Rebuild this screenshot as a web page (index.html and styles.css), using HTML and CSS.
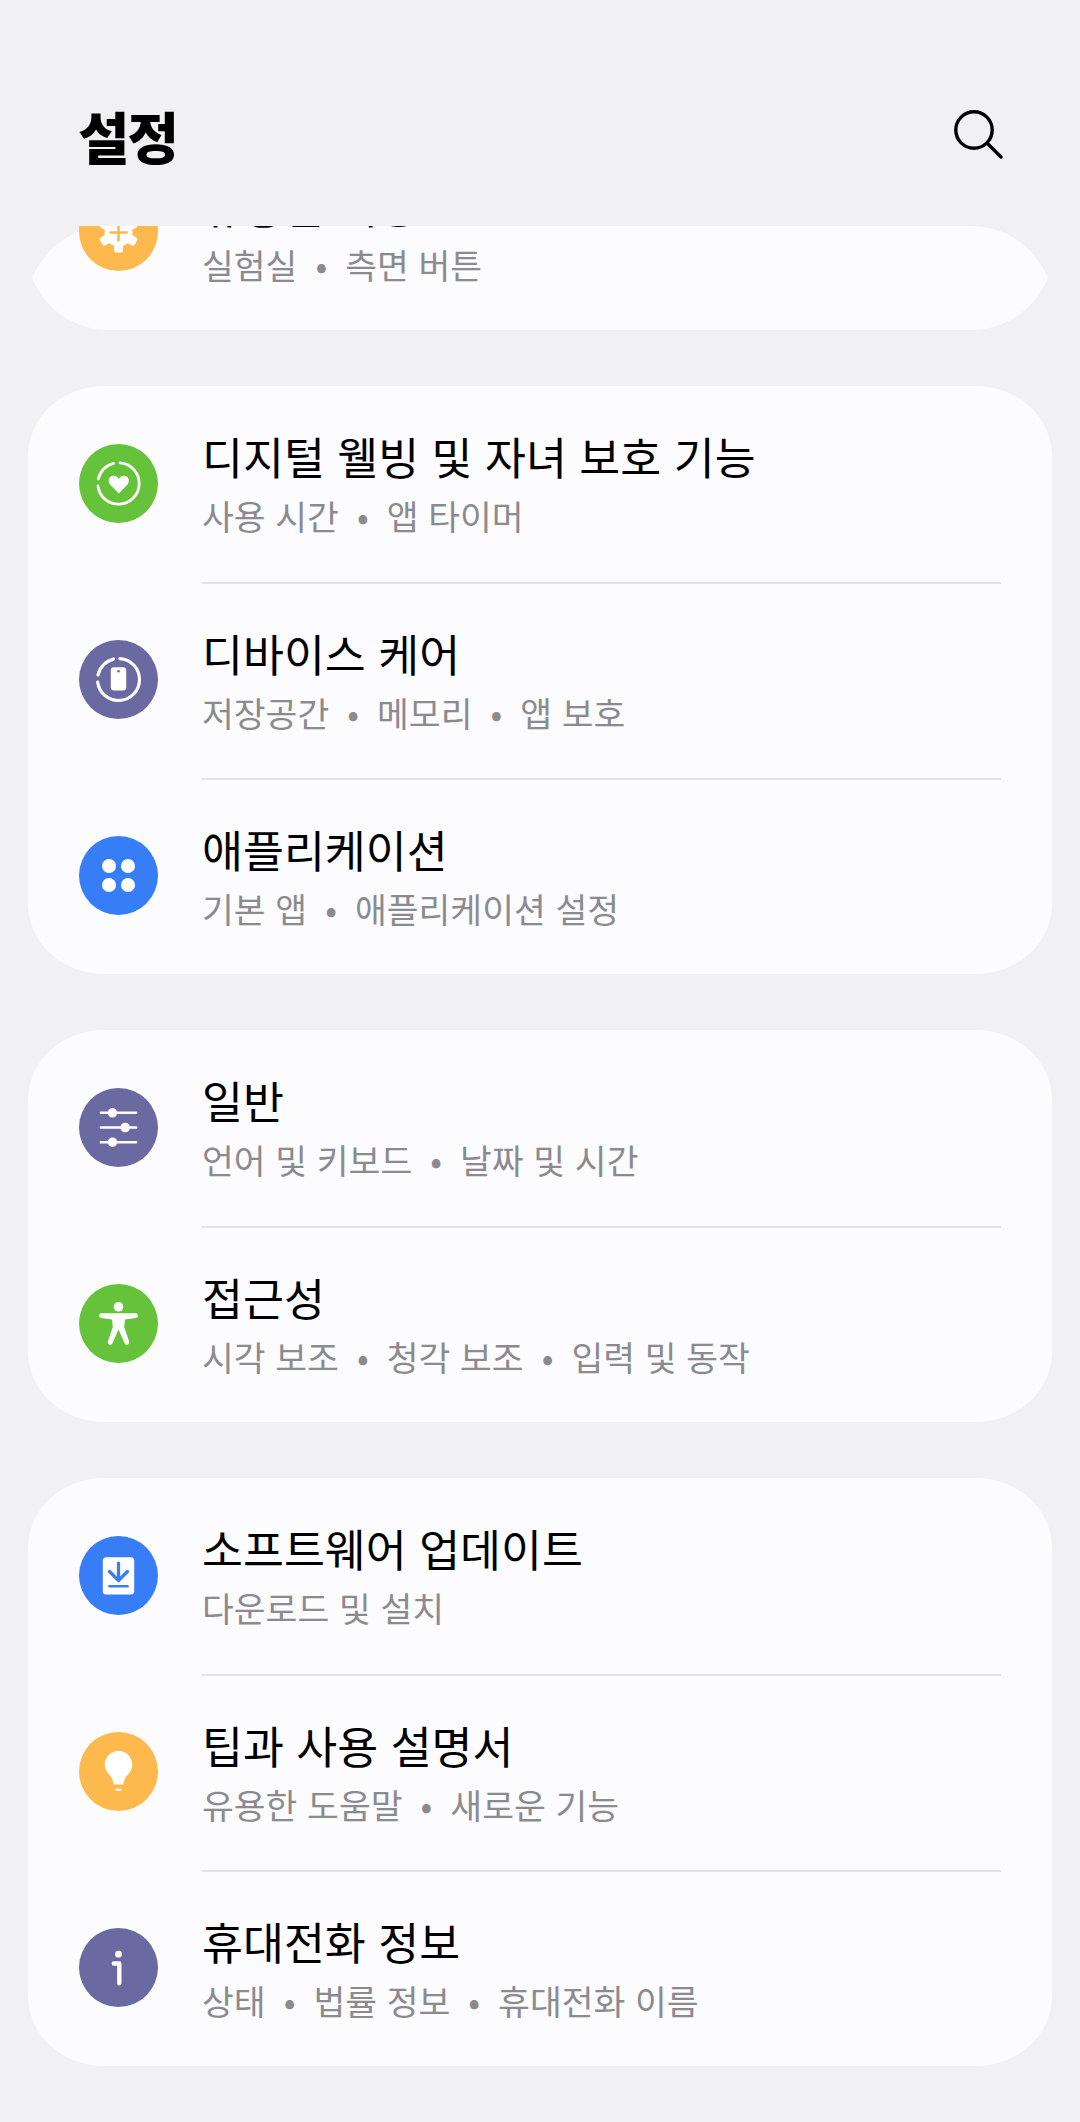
FILE: index.html
```html
<!DOCTYPE html>
<html lang="ko">

<head>
  <meta charset="UTF-8">
  <title>설정</title>
  <link rel="stylesheet" href="styles.css">
</head>

<body>
  <div class="header">
    <h1 class="page-title">설정</h1>
    <svg class="search-icon" viewBox="0 0 50 50" fill="none" stroke="#000" stroke-width="3.4" stroke-linecap="round">
      <circle cx="20" cy="20" r="18.2" />
      <path d="M33 33 L47 47" />
    </svg>
  </div>

  <div class="scroll-area">
    <div class="card card-cut">
      <div class="row row-cut">
        <div class="icon icon-yellow">
          <svg viewBox="0 0 79 79" fill="#fff">
            <circle cx="39.5" cy="40.5" r="14" />
            <g transform="translate(39.5 40.5)">
              <rect x="-4.5" y="-20" width="9" height="40" rx="2.5" />
              <rect x="-4.5" y="-20" width="9" height="40" rx="2.5" transform="rotate(60)" />
              <rect x="-4.5" y="-20" width="9" height="40" rx="2.5" transform="rotate(120)" />
            </g>
            <path d="M31.5 40.5 H47.5 M39.5 32.5 V48.5" stroke="#fdb94d" stroke-width="2.6" stroke-linecap="round" />
          </svg>
        </div>
        <div class="row-text">
          <div class="row-title">유용한 기능</div>
          <div class="row-sub">실험실<span class="sep">•</span>측면 버튼</div>
        </div>
      </div>
    </div>

    <div class="card">
      <div class="row">
        <div class="icon icon-green">
          <svg viewBox="0 0 79 79" fill="none" stroke="#fff" stroke-width="2.8" stroke-linecap="round">
            <path d="M41 18.85 A20.7 20.7 0 1 1 18.95 42" />
            <path d="M19.3 35 A20.7 20.7 0 0 1 34.5 19.4" />
            <path fill="#fff" stroke="none" d="M39.8 49.6 L31 40.5 C28.5 37.5 29.5 32 34.5 31.8 C37 31.7 38.8 33 39.8 35 C40.8 33 42.6 31.7 45 31.8 C50 32 51 37.5 48.5 40.5 Z" />
          </svg>
        </div>
        <div class="row-text">
          <div class="row-title">디지털 웰빙 및 자녀 보호 기능</div>
          <div class="row-sub">사용 시간<span class="sep">•</span>앱 타이머</div>
        </div>
      </div>
      <div class="row">
        <div class="icon icon-purple">
          <svg viewBox="0 0 79 79" fill="none" stroke="#fff" stroke-width="3.2" stroke-linecap="round">
            <path d="M41 18.55 A21 21 0 1 1 18.65 42" />
            <path d="M19 35 A21 21 0 0 1 34.5 19.1" />
            <rect x="31.8" y="27.2" width="15.4" height="23.2" rx="3" fill="#fff" stroke="none" />
            <circle cx="39.5" cy="31.2" r="1.3" fill="#6a69a2" stroke="none" />
          </svg>
        </div>
        <div class="row-text">
          <div class="row-title">디바이스 케어</div>
          <div class="row-sub">저장공간<span class="sep">•</span>메모리<span class="sep">•</span>앱 보호</div>
        </div>
      </div>
      <div class="row">
        <div class="icon icon-blue">
          <svg viewBox="0 0 79 79" fill="#fff">
            <circle cx="30" cy="30" r="7" />
            <circle cx="49" cy="30" r="7" />
            <circle cx="30" cy="49" r="7" />
            <circle cx="49" cy="49" r="7" />
          </svg>
        </div>
        <div class="row-text">
          <div class="row-title">애플리케이션</div>
          <div class="row-sub">기본 앱<span class="sep">•</span>애플리케이션 설정</div>
        </div>
      </div>
    </div>

    <div class="card">
      <div class="row">
        <div class="icon icon-purple">
          <svg viewBox="0 0 79 79" fill="#fff" stroke="#fff" stroke-width="2.4" stroke-linecap="round">
            <path d="M21.8 24.8 H57.2 M21.8 39.5 H57.2 M21.8 54.2 H57.2" />
            <circle cx="33.5" cy="24.8" r="3.6" />
            <circle cx="46.2" cy="39.5" r="3.6" />
            <circle cx="33.5" cy="54.2" r="3.6" />
          </svg>
        </div>
        <div class="row-text">
          <div class="row-title">일반</div>
          <div class="row-sub">언어 및 키보드<span class="sep">•</span>날짜 및 시간</div>
        </div>
      </div>
      <div class="row">
        <div class="icon icon-green">
          <svg viewBox="0 0 79 79" fill="#fff">
            <circle cx="39.5" cy="22.8" r="4.8" />
            <path d="M22.6 29.3 H56.4 a2.3 2.3 0 0 1 .3 4.6 L46 35.6 L45.2 43 L50.2 57.8 a2.4 2.4 0 0 1 -4.5 1.6 L39.5 45.5 L33.3 59.4 a2.4 2.4 0 0 1 -4.5 -1.6 L33.8 43 L33 35.6 L22.3 33.9 a2.3 2.3 0 0 1 .3 -4.6 Z" />
          </svg>
        </div>
        <div class="row-text">
          <div class="row-title">접근성</div>
          <div class="row-sub">시각 보조<span class="sep">•</span>청각 보조<span class="sep">•</span>입력 및 동작</div>
        </div>
      </div>
    </div>

    <div class="card">
      <div class="row">
        <div class="icon icon-blue">
          <svg viewBox="0 0 79 79" fill="none" stroke="#377ef6" stroke-linecap="round" stroke-linejoin="round">
            <rect x="23.8" y="21.2" width="31.4" height="37.3" rx="3.5" fill="#fff" stroke="none" />
            <path d="M39.5 27 V44 M30.5 35.5 L39.5 44.5 L48.5 35.5" stroke-width="3.2" />
            <path d="M30.5 50.3 H48.5" stroke-width="2.6" />
          </svg>
        </div>
        <div class="row-text">
          <div class="row-title">소프트웨어 업데이트</div>
          <div class="row-sub">다운로드 및 설치</div>
        </div>
      </div>
      <div class="row">
        <div class="icon icon-yellow">
          <svg viewBox="0 0 79 79" fill="#fff">
            <path d="M39.5 18.8 a13.8 13.8 0 0 0 -9 24.2 c2 2 3.5 5 4.3 9.5 h9.4 c.8 -4.5 2.3 -7.5 4.3 -9.5 a13.8 13.8 0 0 0 -9 -24.2 Z" />
            <path d="M35.8 56.8 h7.4 c-.5 3 -6.9 3 -7.4 0 Z" />
          </svg>
        </div>
        <div class="row-text">
          <div class="row-title">팁과 사용 설명서</div>
          <div class="row-sub">유용한 도움말<span class="sep">•</span>새로운 기능</div>
        </div>
      </div>
      <div class="row">
        <div class="icon icon-purple">
          <svg viewBox="0 0 79 79" fill="none" stroke="#fff" stroke-width="4.4" stroke-linecap="round" stroke-linejoin="round">
            <circle cx="39.5" cy="26.2" r="3.4" fill="#fff" stroke="none" />
            <path d="M34.8 35.5 H40.3 V55.3" />
          </svg>
        </div>
        <div class="row-text">
          <div class="row-title">휴대전화 정보</div>
          <div class="row-sub">상태<span class="sep">•</span>법률 정보<span class="sep">•</span>휴대전화 이름</div>
        </div>
      </div>
    </div>
  </div>
</body>

</html>
```

FILE: styles.css
```css
html,
body {
  margin: 0;
  height: 2122px;
  overflow: hidden;
}

body {
  background: #f1f1f3;
  font-family: "Noto Sans CJK KR", "Noto Sans", sans-serif;
  color: #000;
}

.header {
  height: 226px;
  box-sizing: border-box;
  padding: 44px 76px 0 78px;
  display: flex;
  justify-content: space-between;
  align-items: center;
}

.page-title {
  margin: 0 0 1px;
  font-size: 56px;
  font-weight: 900;
  letter-spacing: -2px;
}

.search-icon {
  width: 50px;
  height: 50px;
}

.scroll-area {
  height: 1896px;
  overflow: hidden;
}

.card {
  margin: 0 28px 56px;
  background: #fcfcfe;
  border-radius: 76px / 70px;
}

/* first card is scrolled under the header, its corners get squeezed to a point */
.card-cut {
  position: relative;
  margin: 0 32px 56px;
  height: 104px;
  background: none;
}

.card-cut::before {
  content: "";
  position: absolute;
  top: 0;
  left: 0;
  width: 1016px;
  height: 104px;
  background: #fcfcfe;
  clip-path: path("M78 0 H938 C974 0 1002 20 1016 52 C1002 84 974 104 938 104 H78 C42 104 14 84 0 52 C14 20 42 0 78 0 Z");
}

.row {
  height: 196px;
  display: flex;
  align-items: center;
  padding-left: 51px;
}

.row-cut {
  position: relative;
  top: -92px;
  padding-left: 47px;
}

.card-cut .row-text {
  margin-right: 47px;
  padding-bottom: 2px;
}

.icon {
  flex: none;
  width: 79px;
  height: 79px;
  border-radius: 50%;
  margin-right: 44px;
  margin-top: -2px;
}

.icon svg {
  display: block;
  width: 79px;
  height: 79px;
}

.icon-green {
  background: #65c23a;
}

.icon-purple {
  background: #6a69a2;
}

.icon-blue {
  background: #377ef6;
}

.icon-yellow {
  background: #fdb94d;
}

.row-text {
  flex: 1;
  align-self: stretch;
  margin-right: 51px;
  padding-bottom: 4px;
  box-sizing: border-box;
  display: flex;
  flex-direction: column;
  justify-content: center;
}

.row + .row .row-text {
  border-top: 2px solid #e3e3e5;
}

.row-title {
  font-size: 44.5px;
  line-height: 60px;
}

.row-sub {
  font-size: 34.6px;
  line-height: 46px;
  margin-top: 6px;
  color: #8b8b8f;
}

.sep {
  margin: 0 18px;
}
```
